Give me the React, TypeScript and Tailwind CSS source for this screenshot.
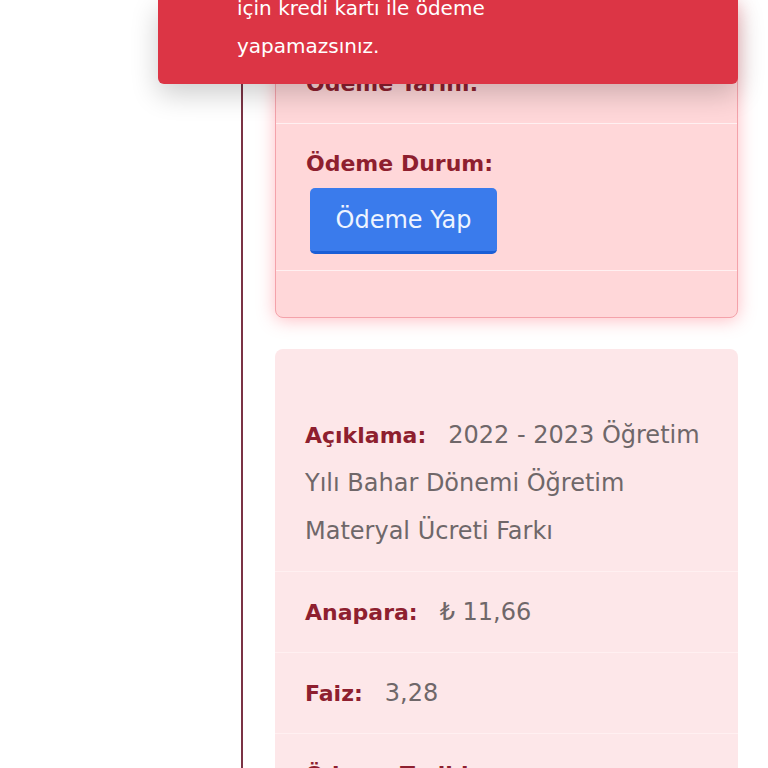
import React from "react";

type Row = { label: string; value?: React.ReactNode };

const font = { fontFamily: '"DejaVu Sans", "Noto Sans", sans-serif' };

function InfoRow({ label, value, last, first }: Row & { last?: boolean; first?: boolean }) {
  return (
    <div
      className={`px-[30px] pb-4 text-[24px] leading-[48px] ${first ? "pt-[59px]" : "pt-4"} ${
        last ? "" : "border-b border-[#fff0f1]"
      }`}
    >
      <span className="mr-[22px] text-[22px] leading-none font-bold text-[#8e1f2f]">{label}</span>
      {value ? <span className="text-[#6f6769]">{value}</span> : null}
    </div>
  );
}

export default function App() {
  return (
    <div
      className="relative h-[768px] w-[768px] overflow-hidden bg-white"
      style={font}
    >
      <div className="flex h-full">
        <div className="w-[241px] shrink-0" />
        <div className="flex h-full flex-col border-l-2 border-[#7b3345] pl-[32px]">
          {/* current installment */}
          <div className="mt-[-1px] w-[463px] rounded-lg border border-[#f4a2aa] bg-[#ffd7d9] pb-[46px] shadow-[0_2px_18px_rgba(255,90,105,0.4)]">
            <InfoRow label="Ödeme Tarihi:" first />
            <div className="border-b border-[#fff0f1] px-[30px] py-4">
              <div className="text-[22px] leading-[48px] font-bold text-[#8e1f2f]">
                Ödeme Durum:
              </div>
              <button className="ml-1 h-[66px] w-[187px] rounded-[5px] border-b-[3px] border-[#1a5ed6] bg-[#3a7bec] text-[24px] text-[#eef4ff]">
                Ödeme Yap
              </button>
            </div>
          </div>

          {/* next installment */}
          <div className="mt-[31px] w-[463px] rounded-lg bg-[#fde7e9] pt-[46px]">
            <InfoRow
              label="Açıklama:"
              value="2022 - 2023 Öğretim Yılı Bahar Dönemi Öğretim Materyal Ücreti Farkı"
            />
            <InfoRow label="Anapara:" value="₺ 11,66" />
            <InfoRow label="Faiz:" value="3,28" />
            <InfoRow label="Ödeme Tarihi:" last />
          </div>
        </div>
      </div>

      {/* toast */}
      <div className="absolute left-[158px] top-0 flex h-[84px] w-[580px] flex-col justify-end overflow-hidden rounded-b-md bg-[#dc3545] pb-[19px] pl-[79px] text-[20px] leading-[38px] text-white shadow-[0_10px_28px_rgba(0,0,0,0.2)]">
        <div>için kredi kartı ile ödeme</div>
        <div>yapamazsınız.</div>
      </div>
    </div>
  );
}
